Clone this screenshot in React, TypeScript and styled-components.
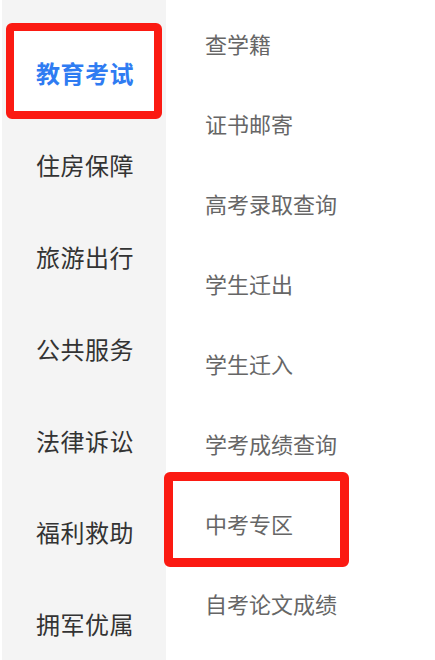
import styled, { createGlobalStyle } from "styled-components";
import { useState } from "react";

const categories = ["教育考试", "住房保障", "旅游出行", "公共服务", "法律诉讼", "福利救助", "拥军优属"];
const services = ["查学籍", "证书邮寄", "高考录取查询", "学生迁出", "学生迁入", "学考成绩查询", "中考专区", "自考论文成绩"];

const App = () => {
    const [active, setActive] = useState<number>(0);
    const marked = 6;
    return (
        <>
            <GlobalStyle />
            <Page>
                <Sidebar>
                    {categories.map((name, i) => (
                        <Category key={name} $active={i === active} onClick={() => setActive(i)}>
                            <span>{name}</span>
                        </Category>
                    ))}
                </Sidebar>
                <ServiceList>
                    {services.map((name, i) => (
                        <Service key={name} $marked={i === marked}>
                            <span>{name}</span>
                        </Service>
                    ))}
                </ServiceList>
            </Page>
        </>
    );
};

const GlobalStyle = createGlobalStyle`
    html, body {
        margin: 0;
        padding: 0;
        background: #ffffff;
    }
    body {
        font-family: "Noto Sans CJK SC", "Noto Sans", sans-serif;
    }
`;

const Page = styled.div`
    display: flex;
    width: 435px;
    height: 660px;
    overflow: hidden;
    background: #ffffff;
`;

const Sidebar = styled.div`
    width: 164px;
    margin-left: 2px;
    flex-shrink: 0;
    padding-top: 27px;
    background: #f4f4f4;
    display: flex;
    flex-direction: column;
`;

const Category = styled.div<{ $active: boolean }>`
    position: relative;
    flex-shrink: 0;
    height: 91.8px;
    display: flex;
    align-items: center;
    padding-left: 34px;
    font-size: 24px;
    letter-spacing: 0.5px;
    font-weight: ${p => (p.$active ? 700 : 400)};
    color: ${p => (p.$active ? "#2f7cf2" : "#333333")};
    cursor: pointer;
    span {
        position: relative;
        z-index: 1;
    }
    &::before {
        content: "";
        display: ${p => (p.$active ? "block" : "none")};
        position: absolute;
        top: -4px;
        left: 4px;
        right: 4px;
        bottom: 0;
        background: #ffffff;
        border: 8px solid #fb1a12;
        border-radius: 6px;
    }
`;

const ServiceList = styled.div`
    flex: 1;
    padding-top: 3px;
    display: flex;
    flex-direction: column;
`;

const Service = styled.div<{ $marked: boolean }>`
    position: relative;
    flex-shrink: 0;
    height: 80px;
    display: flex;
    align-items: center;
    padding-left: 39px;
    font-size: 22px;
    color: #666666;
    &::after {
        content: "";
        display: ${p => (p.$marked ? "block" : "none")};
        position: absolute;
        top: -11px;
        left: -2px;
        width: 185px;
        bottom: -4px;
        box-sizing: border-box;
        border: 9px solid #fb1a12;
        border-radius: 6px;
        pointer-events: none;
    }
`;

export default App;
